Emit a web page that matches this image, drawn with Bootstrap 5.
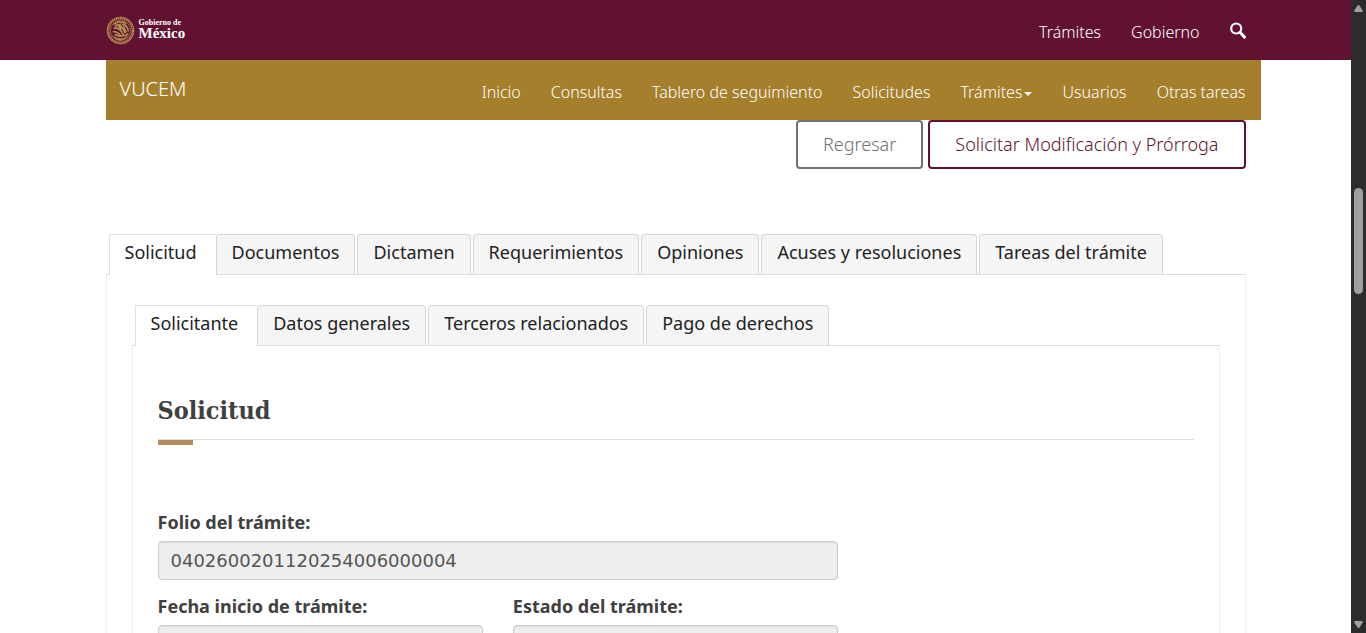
<!DOCTYPE html>
<html lang="es">
<head>
<meta charset="utf-8">
<meta name="viewport" content="width=device-width, initial-scale=1">
<title>VUCEM - Solicitud</title>
<link href="https://cdn.jsdelivr.net/npm/bootstrap@5.3.0/dist/css/bootstrap.min.css" rel="stylesheet">
<style>
  body { font-family: "Noto Sans", sans-serif; font-size: 18px; color: #404041; background: #fff; }
  .page-width { width: 100%; max-width: 1170px; margin-left: auto; margin-right: auto; padding: 0 15px; }
  .gob-bar { background: #611232; }
  .gob-bar .page-width { min-height: 60px; }
  .gob-bar a, .site-bar a { color: #fff; text-decoration: none; }
  .gob-name { font-family: "Liberation Serif", serif; font-weight: 700; font-size: 15px; line-height: 12px; padding-bottom: 2px; }
  .gob-name span { display: block; font-size: 8px; line-height: 8px; }
  .top-links { gap: 30px; font-size: 16px; line-height: 24px; font-weight: 300; padding-top: 4px; }
  .site-bar { background: #a57f2c; margin-right: -15px; min-height: 60px; padding: 0 15px 0 14px; }
  .site-bar a { color: #fff; }
  .site-bar .site-name { font-size: 20px; line-height: 28px; padding-bottom: 2px; font-weight: 300; }
  .caret { display: inline-block; border: 4px solid transparent; border-top-color: currentColor; border-bottom: 0; margin-left: 2px; vertical-align: middle; }
  .action-row { gap: 5px; }
  .btn-gob { border: 2px solid #611232; border-radius: 4px; color: #611232; background: #fff; font-size: 18px; font-weight: 300; line-height: 25px; padding: 10px 25px; }
  .btn-gob.btn-back { border-color: #6f7271; color: #6f7271; }
  .form-area { margin-top: 65px; }
  .tabs-gob { border-bottom: 1px solid #ddd; padding-left: 3px; gap: 2px; --bs-nav-tabs-border-width: 0; }
  .tabs-gob .nav-link { background: #f5f5f5; border: 1px solid #d5d5d5; border-bottom: 0; border-radius: 4px 4px 0 0; color: #222; line-height: 26px; padding: 4px 15px 9px; margin: 0; }
  .tabs-gob .nav-link.active { background: #fff; color: #222; border-radius: 0; border-right: 0; padding-right: 19px; margin: 0 -2px -1px 0; padding-bottom: 10px; }
  .tab-panel { border: 1px solid #eee; border-top: 0; padding: 30px 25px; }
  .tab-panel .tab-panel { padding-top: 47px; }
  .section-title { font-family: "DejaVu Serif Condensed", "Liberation Serif", serif; font-size: 25px; line-height: 36px; font-weight: 700; padding-bottom: 10px; border-bottom: 1px solid #ddd; margin: 0; }
  .title-mark { width: 35px; height: 5px; background: #b38e5d; margin-bottom: 64px; }
  .fields { --bs-gutter-x: 30px; }
  .fields label { font-weight: 700; line-height: 26px; margin-bottom: 6px; }
  .fields input { font-family: "DejaVu Sans", sans-serif; font-size: 18px; line-height: 25px; color: #555; background: #eee; border: 1px solid #ccc; border-radius: 4px; padding: 6px 12px; box-shadow: inset 0 1px 1px rgba(0,0,0,.08); margin-bottom: 13px; }
  .scroll-rail { width: 15px; flex: none; background: #2c2c2c; padding: 5px 0; }
  .scroll-thumb { width: 9px; height: 17%; margin-top: 175px; border-radius: 5px; background: #9f9f9f; }
</style>
</head>
<body>
<div class="d-flex vh-100 overflow-hidden">
  <div class="flex-grow-1 overflow-hidden">
    <header class="gob-bar">
      <div class="page-width d-flex align-items-center justify-content-between">
        <a href="#" class="d-flex align-items-center gap-1">
          <svg width="29" height="29" viewBox="0 0 30 30" fill="none" stroke="#b28d50" aria-hidden="true">
            <circle cx="15" cy="15" r="12.8" stroke-width="2.6" stroke-dasharray="1.6 .6"/>
            <circle cx="15" cy="15" r="14" stroke-width=".6"/>
            <circle cx="15" cy="15" r="10.4" stroke-width=".7"/>
            <path d="M8 9c3-3 6-4 8-2l2-1 2 2-2 1c3 1 5 4 5 7M9 11c3-2 6-2 8 1l3 6M8 13c3-1 6 0 8 3l2 4M7 16c3 0 6 1 8 4M9 19l5 2 7-1 2-2M11 8l5 6M14 8l2 5M18 11l3 6" stroke-width="1.7"/>
            <path d="M8 21c4 4 10 4 14 0M10 23c3 2 7 2 10 0" stroke-width="1.2"/>
            <path d="M20 9l2 4M12 17l1 2" stroke-width="1"/>
          </svg>
          <span class="gob-name"><span>Gobierno de</span>México</span>
        </a>
        <nav class="top-links d-flex align-items-center" aria-label="Gobierno">
          <a href="#">Trámites</a>
          <a href="#">Gobierno</a>
          <a href="#" aria-label="Buscar" class="d-flex pb-1"><svg width="16" height="17" viewBox="0 0 16 17" fill="none" stroke="#fff"><circle cx="6.200" cy="6.500" r="5" stroke-width="2.2"/><path d="M10 10.300l4.500 4.800" stroke-width="3" stroke-linecap="round"/></svg></a>
        </nav>
      </div>
    </header>
    <main class="page-width">
      <nav class="site-bar d-flex align-items-center justify-content-between" aria-label="VUCEM">
        <a href="#" class="site-name">VUCEM</a>
        <div class="top-links d-flex">
          <a href="#">Inicio</a>
          <a href="#">Consultas</a>
          <a href="#">Tablero de seguimiento</a>
          <a href="#">Solicitudes</a>
          <a href="#">Trámites<span class="caret"></span></a>
          <a href="#">Usuarios</a>
          <a href="#">Otras tareas</a>
        </div>
      </nav>
      <div class="action-row d-flex justify-content-end">
        <button type="button" class="btn btn-gob btn-back">Regresar</button>
        <button type="button" class="btn btn-gob">Solicitar Modificación y Prórroga</button>
      </div>
      <section class="form-area">
        <ul class="nav nav-tabs tabs-gob">
          <li class="nav-item"><a class="nav-link active" href="#">Solicitud</a></li>
          <li class="nav-item"><a class="nav-link" href="#">Documentos</a></li>
          <li class="nav-item"><a class="nav-link" href="#">Dictamen</a></li>
          <li class="nav-item"><a class="nav-link" href="#">Requerimientos</a></li>
          <li class="nav-item"><a class="nav-link" href="#">Opiniones</a></li>
          <li class="nav-item"><a class="nav-link" href="#">Acuses y resoluciones</a></li>
          <li class="nav-item"><a class="nav-link" href="#">Tareas del trámite</a></li>
        </ul>
        <div class="tab-panel">
          <ul class="nav nav-tabs tabs-gob">
            <li class="nav-item"><a class="nav-link active" href="#">Solicitante</a></li>
            <li class="nav-item"><a class="nav-link" href="#">Datos generales</a></li>
            <li class="nav-item"><a class="nav-link" href="#">Terceros relacionados</a></li>
            <li class="nav-item"><a class="nav-link" href="#">Pago de derechos</a></li>
          </ul>
          <div class="tab-panel">
            <h3 class="section-title">Solicitud</h3>
            <div class="title-mark"></div>
            <form>
              <div class="row fields">
                <div class="col-8">
                  <label for="folio">Folio del trámite:</label>
                  <input id="folio" class="w-100 d-block" type="text" value="0402600201120254006000004" readonly>
                </div>
              </div>
              <div class="row fields">
                <div class="col-4">
                  <label for="fecha">Fecha inicio de trámite:</label>
                  <input id="fecha" class="w-100 d-block" type="text" readonly>
                </div>
                <div class="col-4">
                  <label for="estado">Estado del trámite:</label>
                  <input id="estado" class="w-100 d-block" type="text" readonly>
                </div>
              </div>
            </form>
          </div>
        </div>
      </section>
    </main>
  </div>
  <div class="scroll-rail d-flex flex-column align-items-center" aria-hidden="true">
    <svg width="9" height="8" viewBox="0 0 9 8" fill="#9f9f9f"><path d="M3.5 .5Q4.500-.5 5.500.5L8.700 5.500Q9 7 8 7H1Q0 7 .3 5.500Z"/></svg>
    <div class="scroll-thumb"></div>
    <svg class="mt-auto" width="9" height="8" viewBox="0 0 9 8" fill="#9f9f9f"><path d="M3.500 7.500Q4.500 8.500 5.500 7.500L8.700 2.500Q9 1 8 1H1Q0 1 .3 2.500Z"/></svg>
  </div>
</div>
<script src="https://cdn.jsdelivr.net/npm/bootstrap@5.3.0/dist/js/bootstrap.bundle.min.js"></script>
</body>
</html>
